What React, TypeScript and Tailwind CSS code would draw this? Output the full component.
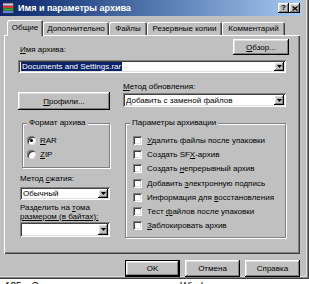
import React from "react";

const raised =
  "shadow-[inset_-1px_-1px_0_#000,inset_1px_1px_0_#fff,inset_-2px_-2px_0_#808080,inset_2px_2px_0_#dfdfdf]";
const sunken =
  "shadow-[inset_1px_1px_0_#808080,inset_-1px_-1px_0_#fff,inset_2px_2px_0_#404040,inset_-2px_-2px_0_#dfdfdf]";

function U({ c }: { c: string }) {
  return <span className="underline underline-offset-[1px]">{c}</span>;
}

function Arrow() {
  return (
    <svg width="5" height="3" viewBox="0 0 5 3">
      <path d="M0 0h5L2.5 3z" fill="#000" />
    </svg>
  );
}

function Combo({ className, children }: { className: string; children?: React.ReactNode }) {
  return (
    <div className={`flex bg-white p-[2px] ${sunken} ${className}`}>
      <div className="flex-1 flex items-center pl-[1px] overflow-hidden whitespace-nowrap leading-[9px]">
        {children}
      </div>
      <div className={`w-[10px] bg-[#c0c0c0] flex items-center justify-center ${raised}`}>
        <Arrow />
      </div>
    </div>
  );
}

function Btn({ className, children }: { className: string; children: React.ReactNode }) {
  return (
    <div className={`flex items-center justify-center bg-[#c0c0c0] leading-[9px] ${raised} ${className}`}>
      {children}
    </div>
  );
}

function Radio({ checked }: { checked?: boolean }) {
  return (
    <div className="w-[9px] h-[9px] rounded-full bg-white flex items-center justify-center shadow-[inset_1px_1px_0_#808080,inset_-1px_-1px_0_#dfdfdf,inset_2px_2px_0_#404040]">
      {checked && <div className="w-[3px] h-[3px] rounded-full bg-black" />}
    </div>
  );
}

function Check() {
  return <div className={`w-[9px] h-[9px] bg-white shrink-0 ${sunken}`} />;
}

function Icon() {
  return (
    <svg width="15" height="12" viewBox="0 0 15 12">
      <rect x="1" y="0.5" width="13" height="11" fill="#404040" />
      <rect x="2" y="1.5" width="11" height="2" fill="#d8d0f0" />
      <rect x="2" y="4" width="11" height="2" fill="#e03030" />
      <rect x="2" y="6.5" width="11" height="2" fill="#30b030" />
      <rect x="2" y="9" width="11" height="2" fill="#6080e0" />
      <rect x="1" y="0.5" width="2" height="11" fill="#202060" />
    </svg>
  );
}

const checks: React.ReactNode[] = [
  <><U c="У" />далить файлы после упаковки</>,
  <>Создать SF<U c="X" />-архив</>,
  <>Создать <U c="н" />епрерывный архив</>,
  <>Добавить <U c="э" />лектронную подпись</>,
  <>Информация для <U c="в" />осстановления</>,
  <>Тест <U c="ф" />айлов после упаковки</>,
  <><U c="З" />аблокировать архив</>,
];

export default function App() {
  return (
    <div className="w-[309px] h-[284px] overflow-hidden bg-white flex flex-col font-['Liberation_Sans',Arial,sans-serif] text-[8px] text-black">
      <div className="w-[309px] h-[279px] shrink-0 bg-[#c0c0c0] flex shadow-[inset_-1px_-1px_0_#404040,inset_-2px_-2px_0_#808080,inset_-3px_-3px_0_#dfdfdf]">
        <div className="w-[303px] flex flex-col">
          {/* title bar */}
          <div className="h-[16px] w-[302px] flex items-center bg-linear-to-r from-[#0a246a] to-[#a6caf0]">
            <Icon />
            <span className="ml-[3px] text-white font-bold text-[9px] leading-[10px]">
              Имя и параметры архива
            </span>
            <div className="ml-auto mr-[2px] flex">
              <div className={`w-[11px] h-[10px] bg-[#c0c0c0] flex items-center justify-center font-bold text-[8px] leading-[8px] ${raised}`}>
                ?
              </div>
              <div className={`w-[11px] h-[10px] bg-[#c0c0c0] flex items-center justify-center ${raised}`}>
                <svg width="6" height="5" viewBox="0 0 6 5">
                  <path d="M0.5 0.5L5.5 4.5M5.5 0.5L0.5 4.5" stroke="#000" strokeWidth="1.3" />
                </svg>
              </div>
            </div>
          </div>

          {/* tabs */}
          <div className="mt-[4px] h-[15px] flex items-end pl-[7px] relative z-10">
            <div className="h-[16px] w-[36px] -mb-[1px] bg-[#c0c0c0] rounded-t-[2px] flex items-center justify-center leading-[9px] pb-[1px] shadow-[inset_1px_1px_0_#fff,inset_-1px_0_0_#404040,inset_-2px_0_0_#808080]">
              Общие
            </div>
            <div className="h-[13px] w-[66px] rounded-t-[2px] flex items-center justify-center leading-[9px] shadow-[inset_1px_1px_0_#fff,inset_-1px_0_0_#404040,inset_-2px_0_0_#808080]">
              Дополнительно
            </div>
            <div className="h-[13px] w-[38px] rounded-t-[2px] flex items-center justify-center leading-[9px] shadow-[inset_1px_1px_0_#fff,inset_-1px_0_0_#404040,inset_-2px_0_0_#808080]">
              Файлы
            </div>
            <div className="h-[13px] w-[75px] rounded-t-[2px] flex items-center justify-center leading-[9px] shadow-[inset_1px_1px_0_#fff,inset_-1px_0_0_#404040,inset_-2px_0_0_#808080]">
              Резервные копии
            </div>
            <div className="h-[13px] w-[63px] rounded-t-[2px] flex items-center justify-center leading-[9px] shadow-[inset_1px_1px_0_#fff,inset_-1px_0_0_#404040,inset_-2px_0_0_#808080]">
              Комментарий
            </div>
          </div>

          {/* panel */}
          <div className="ml-[4px] w-[296px] h-[219px] flex flex-col px-[14px] shadow-[inset_1px_1px_0_#fff,inset_-1px_-1px_0_#404040,inset_-2px_-2px_0_#808080]">
            <div className="mt-[4px] h-[16px] flex items-end justify-between">
              <span className="pl-[2px] leading-[10px]">
                <U c="И" />мя архива:
              </span>
              <Btn className="w-[56px] h-[16px] -mr-[3px]">
                <U c="О" />бзор...
              </Btn>
            </div>
            <Combo className="mt-[5px] h-[13px] w-full">
              <span className="bg-[#0a246a] text-white px-[1px]">Documents and Settings.rar</span>
            </Combo>

            <div className="mt-[9px] flex gap-[13px] items-start">
              <div className="w-[92px] flex flex-col">
                <Btn className="mt-[10px] h-[18px] w-full">
                  <U c="П" />рофили...
                </Btn>
              </div>
              <div className="flex-1 flex flex-col">
                <span className="leading-[10px]">
                  <U c="М" />етод обновления:
                </span>
                <Combo className="mt-[1px] h-[14px]">Добавить с заменой файлов</Combo>
              </div>
            </div>

            <div className="mt-[13px] flex gap-[13px] items-start">
              <div className="w-[92px] flex flex-col">
                <div className="relative ml-[4px] w-[88px] h-[45px] border border-[#808080] shadow-[1px_1px_0_#fff,inset_1px_1px_0_#fff] pt-[9px] pl-[4px] flex flex-col">
                  <span className="absolute left-[4px] -top-[6px] bg-[#c0c0c0] px-[2px] leading-[10px]">
                    Формат архива
                  </span>
                  <div className="h-[14px] flex items-center gap-[4px]">
                    <Radio checked />
                    <span className="leading-[9px]">
                      <U c="R" />AR
                    </span>
                  </div>
                  <div className="h-[14px] flex items-center gap-[4px]">
                    <Radio />
                    <span className="leading-[9px]">
                      <U c="Z" />IP
                    </span>
                  </div>
                </div>
                <span className="mt-[6px] ml-[2px] leading-[10px]">
                  Метод <U c="с" />жатия:
                </span>
                <Combo className="mt-[3px] ml-[2px] w-[90px] h-[13px]">Обычный</Combo>
                <span className="mt-[4px] ml-[2px] leading-[8.5px]">
                  Разделить на <U c="т" />ома
                  <br />
                  <span className="underline underline-offset-[1px]">размером (в байтах):</span>
                </span>
                <Combo className="mt-[1px] ml-[2px] w-[90px] h-[15px]" />
              </div>
              <div className="relative ml-[2px] w-[162px] h-[115px] border border-[#808080] shadow-[1px_1px_0_#fff,inset_1px_1px_0_#fff] pt-[9px] pl-[7px] flex flex-col">
                <span className="absolute left-[4px] -top-[6px] bg-[#c0c0c0] px-[2px] leading-[10px]">
                  Параметры архивации
                </span>
                {checks.map((c, i) => (
                  <div key={i} className="h-[14.3px] flex items-center gap-[5px] whitespace-nowrap">
                    <Check />
                    <span className="leading-[9px]">{c}</span>
                  </div>
                ))}
              </div>
            </div>
          </div>

          {/* buttons */}
          <div className="mt-[6px] flex justify-end gap-[5px] pr-[3px]">
            <Btn className="w-[55px] h-[17px] border border-black">OK</Btn>
            <Btn className="w-[55px] h-[17px]">Отмена</Btn>
            <Btn className="w-[55px] h-[17px]">Справка</Btn>
          </div>
        </div>
      </div>
      <div className="h-[5px] overflow-hidden flex text-[10px] leading-[10px] pt-[3px] text-black">
        <span className="ml-[5px]">125</span>
        <span className="ml-[10px]">Элементы</span>
        <span className="ml-[18px]">окна</span>
        <span className="ml-[10px]">диалога</span>
        <span className="ml-[14px]">Windows</span>
      </div>
    </div>
  );
}
